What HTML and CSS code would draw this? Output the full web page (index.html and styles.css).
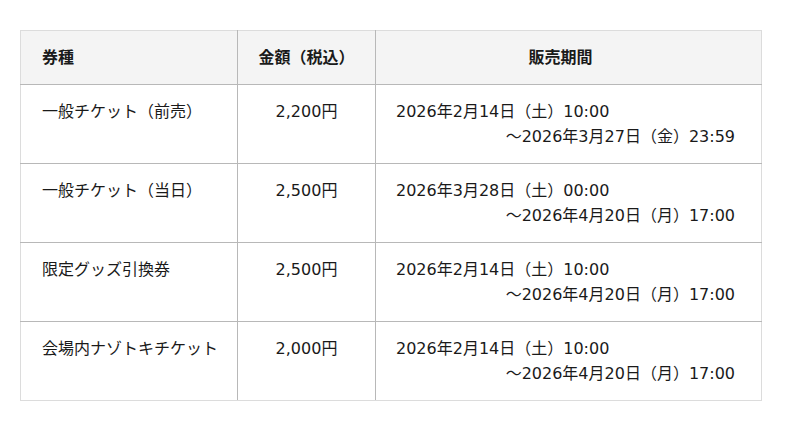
FILE: index.html
```html
<!DOCTYPE html>
<html lang="ja">
<head>
<meta charset="utf-8">
<link rel="stylesheet" href="styles.css">
</head>
<body>
<table class="tickets">
  <colgroup>
    <col class="c-type">
    <col class="c-price">
    <col class="c-period">
  </colgroup>
  <thead>
    <tr>
      <th class="h-type">券種</th>
      <th>金額（税込）</th>
      <th class="h-period">販売期間</th>
    </tr>
  </thead>
  <tbody>
    <tr>
      <td class="type">一般チケット（前売）</td>
      <td class="price">2,200円</td>
      <td class="period"><span class="from">2026年2月14日（土）10:00</span><span class="to">～2026年3月27日（金）23:59</span></td>
    </tr>
    <tr>
      <td class="type">一般チケット（当日）</td>
      <td class="price">2,500円</td>
      <td class="period"><span class="from">2026年3月28日（土）00:00</span><span class="to">～2026年4月20日（月）17:00</span></td>
    </tr>
    <tr>
      <td class="type">限定グッズ引換券</td>
      <td class="price">2,500円</td>
      <td class="period"><span class="from">2026年2月14日（土）10:00</span><span class="to">～2026年4月20日（月）17:00</span></td>
    </tr>
    <tr>
      <td class="type">会場内ナゾトキチケット</td>
      <td class="price">2,000円</td>
      <td class="period"><span class="from">2026年2月14日（土）10:00</span><span class="to">～2026年4月20日（月）17:00</span></td>
    </tr>
  </tbody>
</table>
</body>
</html>
```

FILE: styles.css
```css
html, body {
  margin: 0;
  padding: 0;
  background: #ffffff;
}
body {
  padding: 30px 38px 30px 20px;
  font-family: "DejaVu Sans", "Noto Sans CJK JP", sans-serif;
  font-size: 16px;
  color: #1a1a1a;
}
.tickets {
  width: 742px;
  table-layout: fixed;
  border-collapse: collapse;
  border: 1px solid #dcdcdc;
}
.c-type { width: 217px; }
.c-price { width: 138px; }
.tickets th {
  background: #f4f4f4;
  font-weight: bold;
  height: 53px;
  padding: 0 20px;
  line-height: 22px;
  text-align: center;
  border-right: 1px solid #b8b8b8;
  border-bottom: 1px solid #b8b8b8;
}
.tickets th.h-type { text-align: left; padding-left: 21px; }
.tickets th.h-period { padding-right: 36px; }
.tickets td {
  vertical-align: top;
  padding: 14px 20px 14px;
  line-height: 25px;
  height: 50px;
  border-right: 1px solid #b8b8b8;
  border-bottom: 1px solid #b8b8b8;
}
.tickets th:last-child, .tickets td:last-child { border-right: 1px solid #dcdcdc; }
.tickets tbody tr:last-child td { border-bottom: 1px solid #dcdcdc; }
.tickets td.type { padding-left: 21px; padding-right: 8px; white-space: nowrap; }
.tickets td.price { text-align: center; }
.tickets td.period { padding-right: 26px; }
.from, .to { display: block; white-space: nowrap; }
.to { text-align: right; }
```
